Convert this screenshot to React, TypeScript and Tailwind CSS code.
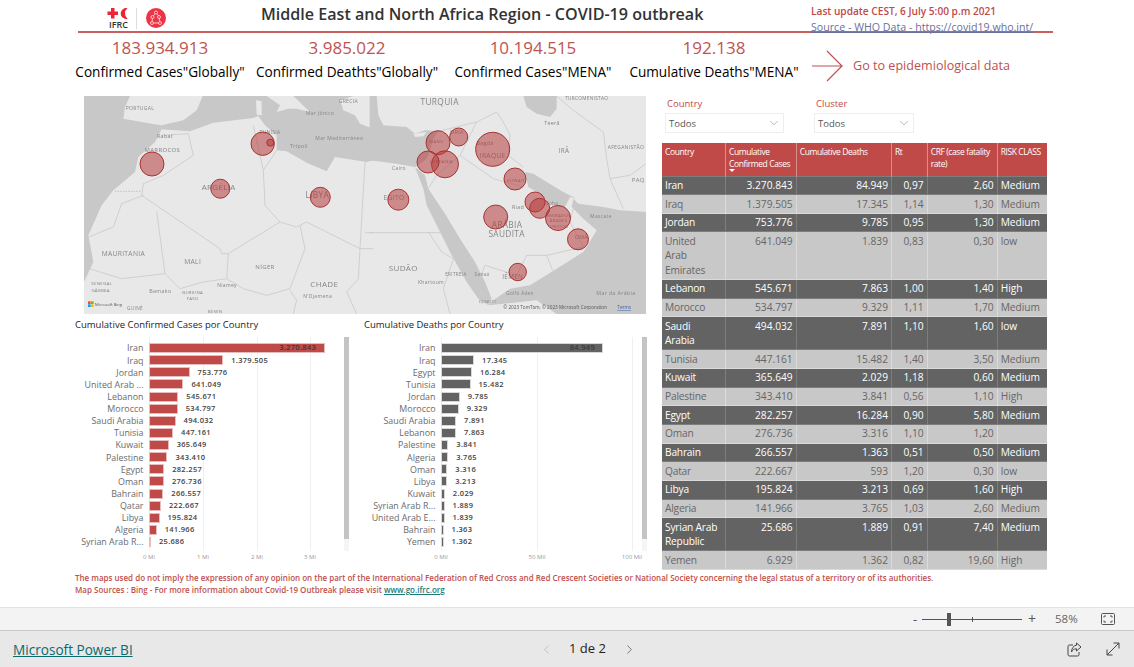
import { ChevronDown, ChevronLeft, ChevronRight } from 'lucide-react';

// ==========================================
// Data
// ==========================================

const kpis = [
  { value: '183.934.913', label: 'Confirmed Cases"Globally"', width: 'w-[180px]' },
  { value: '3.985.022', label: 'Confirmed Deathts"Globally"', width: 'w-[194px]' },
  { value: '10.194.515', label: 'Confirmed Cases"MENA"', width: 'w-[178px]' },
  { value: '192.138', label: 'Cumulative Deaths"MENA"', width: 'w-[184px]' },
];

const rows = [
  ['Iran', '3.270.843', '84.949', '0,97', '2,60', 'Medium'],
  ['Iraq', '1.379.505', '17.345', '1,14', '1,30', 'Medium'],
  ['Jordan', '753.776', '9.785', '0,95', '1,30', 'Medium'],
  ['United\nArab\nEmirates', '641.049', '1.839', '0,83', '0,30', 'low'],
  ['Lebanon', '545.671', '7.863', '1,00', '1,40', 'High'],
  ['Morocco', '534.797', '9.329', '1,11', '1,70', 'Medium'],
  ['Saudi\nArabia', '494.032', '7.891', '1,10', '1,60', 'low'],
  ['Tunisia', '447.161', '15.482', '1,40', '3,50', 'Medium'],
  ['Kuwait', '365.649', '2.029', '1,18', '0,60', 'Medium'],
  ['Palestine', '343.410', '3.841', '0,56', '1,10', 'High'],
  ['Egypt', '282.257', '16.284', '0,90', '5,80', 'Medium'],
  ['Oman', '276.736', '3.316', '1,10', '1,20', ''],
  ['Bahrain', '266.557', '1.363', '0,51', '0,50', 'Medium'],
  ['Qatar', '222.667', '593', '1,20', '0,30', 'low'],
  ['Libya', '195.824', '3.213', '0,69', '1,60', 'High'],
  ['Algeria', '141.966', '3.765', '1,03', '2,60', 'Medium'],
  ['Syrian Arab\nRepublic', '25.686', '1.889', '0,91', '7,40', 'Medium'],
  ['Yemen', '6.929', '1.362', '0,82', '19,60', 'High'],
];

const casesChart: [string, number][] = [
  ['Iran', 3270843],
  ['Iraq', 1379505],
  ['Jordan', 753776],
  ['United Arab ...', 641049],
  ['Lebanon', 545671],
  ['Morocco', 534797],
  ['Saudi Arabia', 494032],
  ['Tunisia', 447161],
  ['Kuwait', 365649],
  ['Palestine', 343410],
  ['Egypt', 282257],
  ['Oman', 276736],
  ['Bahrain', 266557],
  ['Qatar', 222667],
  ['Libya', 195824],
  ['Algeria', 141966],
  ['Syrian Arab R...', 25686],
];

const deathsChart: [string, number][] = [
  ['Iran', 84949],
  ['Iraq', 17345],
  ['Egypt', 16284],
  ['Tunisia', 15482],
  ['Jordan', 9785],
  ['Morocco', 9329],
  ['Saudi Arabia', 7891],
  ['Lebanon', 7863],
  ['Palestine', 3841],
  ['Algeria', 3765],
  ['Oman', 3316],
  ['Libya', 3213],
  ['Kuwait', 2029],
  ['Syrian Arab R...', 1889],
  ['United Arab E...', 1839],
  ['Bahrain', 1363],
  ['Yemen', 1362],
];

const bubbles = [
  [68, 68, 12],
  [178.7, 47.7, 11.7],
  [186.3, 46.7, 3.5],
  [136.3, 92.7, 9.5],
  [236.3, 101.3, 10],
  [314.3, 103.7, 10.5],
  [354, 46.7, 12],
  [374.7, 41, 9],
  [408.7, 53.3, 17],
  [361, 68.3, 13.5],
  [344, 66, 11],
  [431, 83, 11],
  [411.7, 121, 12],
  [451, 106, 10],
  [455.7, 112.3, 10],
  [474, 122, 12.5],
  [494, 143.3, 10.5],
  [433.7, 176, 8.7],
];

const westLabels: [string, number, number, number][] = [
  ['PORTUGAL', 180, 54, 15],
  ['Rabat', 255, 139, 16],
  ['MARROCOS', 247, 181, 18],
  ['TUNÍSIA', 570, 125, 15],
  ['Trípoli', 657, 167, 16],
  ['Mar Jônico', 720, 68, 15],
  ['GRÉCIA', 805, 34, 15],
  ['Mar Mediterrâneo', 778, 145, 15],
  ['ARGÉLIA', 416, 293, 24],
  ['LIBYA', 712, 317, 25],
  ['MAURITANIA', 130, 492, 20],
  ['MALI', 338, 517, 20],
  ['NÍGER', 555, 530, 18],
  ['CHADE', 733, 586, 24],
  ['SENEGAL', 65, 578, 13],
  ['GÂMBIA', 62, 601, 13],
  ['Bamako', 241, 604, 16],
  ['BURKINA', 338, 607, 13],
  ['FASO', 338, 625, 13],
  ['Niamey', 441, 586, 15],
  ["N'Djamena", 713, 618, 15],
  ['GUINÉ', 165, 655, 14],
  ['BENIN', 405, 662, 13],
];

const eastLabels: [string, number, number, number][] = [
  ['TURQUIA', 209, 38, 25],
  ['TURCOMENISTÃO', 650, 24, 14],
  ['Teerã', 546, 98, 16],
  ['IRÃ', 582, 184, 19],
  ['AFEGANISTÃO', 768, 171, 15],
  ['PAQ', 805, 271, 18],
  ['SÍRIA', 260, 125, 15],
  ['Bagdá', 345, 158, 16],
  ['IRAQUE', 368, 197, 20],
  ['LÍBANO', 195, 152, 13],
  ['JORDANIA', 215, 212, 13],
  ['KUWAIT', 438, 270, 13],
  ['Cairo', 87, 234, 15],
  ['EGITO', 72, 324, 20],
  ['Riad', 444, 352, 16],
  ['Doha', 545, 339, 14],
  ['EMIRADOS', 566, 375, 13],
  ['ÁRABES', 566, 391, 13],
  ['UNIDOS', 566, 409, 13],
  ['Mascate', 693, 377, 15],
  ['ARÁBIA', 411, 407, 25],
  ['SAUDITA', 410, 436, 25],
  ['OMÃ', 634, 441, 16],
  ['SUDÃO', 100, 538, 24],
  ['ERITREIA', 258, 553, 14],
  ['Sanaá', 336, 552, 14],
  ['IÊMEN', 428, 562, 19],
  ['Khartoum', 183, 577, 15],
  ['Golfo Áden', 450, 610, 14],
  ['Mar da Arábia', 738, 609, 16],
  ['DJIBUTI', 352, 634, 13],
];

// ==========================================
// Map
// ==========================================

function RegionMap() {
  return (
    <div className="relative ml-[9px] h-[218px] w-[562px] overflow-hidden">
      <svg viewBox="0 0 1686 654" className="h-full w-full blur-[0.35px]">
        <rect width="1686" height="654" fill="#e8e8e8" />
        <g transform="translate(-12,-12)">
          <path
            d="M12 12L150 12L135 45L130 80L215 95L245 100L245 112L225 150L175 195L165 240L100 295L65 340L25 430L40 510L12 570Z"
            fill="#c8c8c8"
          />
          <path
            d="M245 100L310 85L350 55L368 12L880 12L880 205L860 210L765 195L740 238L680 212L620 178L590 175L590 130L555 100L535 72L520 78L400 92L330 118L245 112Z"
            fill="#c8c8c8"
          />
          <path
            d="M500 12L640 12L690 60L650 50L625 50L590 60L600 40L560 12ZM780 25L820 12L880 12L880 110L840 95L825 70L790 55ZM528 25L545 28L545 70L530 68Z"
            fill="#e8e8e8"
          />
          <g fill="none" stroke="#cacaca" strokeWidth="2.5">
            <path d="M245 130L325 125L340 190L250 250L190 275L185 310L420 470L425 485L445 485L600 390L555 340L550 235L540 190L520 100" />
            <path d="M550 235L590 175M190 310L125 335L100 405L25 435M230 358L255 545L125 560L60 540L30 530M445 485L440 560L370 570L300 590L255 545" />
            <path d="M600 390L650 405L680 390L840 470L855 210M660 400L675 470L630 590L560 610L490 590L440 560M840 470L835 560L800 600L830 666M630 595L650 625L640 666M840 470L880 470M855 422L880 422" />
          </g>
          <path d="M105 298L185 298" stroke="#aaaaaa" strokeWidth="2" strokeDasharray="4 4" />
        </g>
        <g transform="translate(858,-12)">
          <path
            d="M-1 12L20 12L25 70L40 100L110 105L135 125L165 115L205 118L190 140L175 190L165 205L135 225L80 215L0 205L-1 205Z"
            fill="#c8c8c8"
          />
          <path d="M460 12L560 12L560 50L540 75L500 65L470 45Z" fill="#c8c8c8" />
          <path
            d="M135 225L160 290L170 340L215 430L245 490L290 570L325 620L355 640L365 620L345 570L315 510L270 440L225 365L175 290L165 250Z"
            fill="#c8c8c8"
          />
          <path d="M465 240L475 285L510 305L545 340L585 345L600 315L620 320L580 300L530 270L490 245Z" fill="#c8c8c8" />
          <path
            d="M828 360L750 355L700 345L625 335L610 320L605 345L640 380L680 415L650 465L640 480L560 530L480 580L420 590L370 625L355 640L400 635L500 625L560 666L828 666Z"
            fill="#c8c8c8"
          />
          <path d="M130 125L170 120L160 133L135 135Z" fill="#e8e8e8" />
          <g fill="none" stroke="#cacaca" strokeWidth="2.5">
            <path d="M-3 422L222 422M205 118L320 90L380 60L400 90L420 130L415 190L460 225M320 90L270 190L370 260L460 285M270 190L200 250L175 290" />
            <path d="M560 12L610 55L700 120L710 200L720 260L780 250L828 215M720 260L760 350M530 490L640 465L600 390L610 350M530 490L470 490L440 550L345 520L330 560M530 490L548 535" />
            <path d="M175 420L215 480L250 500L220 590L240 666" />
          </g>
        </g>
        <g fontFamily="'Open Sans', sans-serif" textAnchor="middle" fill="#858585">
          <g transform="translate(-12,-12)">
            {westLabels.map(([t, x, y, s]) => (
              <text key={t} x={x} y={y} fontSize={s} letterSpacing="1">
                {t}
              </text>
            ))}
          </g>
          <g transform="translate(858,-12)">
            {eastLabels.map(([t, x, y, s]) => (
              <text key={t} x={x} y={y} fontSize={s} letterSpacing="1">
                {t}
              </text>
            ))}
          </g>
        </g>
        {bubbles.map(([x, y, r]) => (
          <circle
            key={`${x}-${y}`}
            cx={x * 3}
            cy={y * 3}
            r={r * 3}
            fill="#b53c3c"
            fillOpacity="0.55"
            stroke="#a83333"
            strokeWidth="3"
          />
        ))}
        <g transform="translate(12,616)">
          <rect x="0" y="0" width="8" height="8" fill="#f25022" />
          <rect x="9" y="0" width="8" height="8" fill="#7fba00" />
          <rect x="0" y="9" width="8" height="8" fill="#00a4ef" />
          <rect x="9" y="9" width="8" height="8" fill="#ffb900" />
          <text x="21" y="14" fontSize="12" fill="#555555" fontFamily="'Open Sans', sans-serif">
            Microsoft Bing
          </text>
        </g>
        <text x="1258" y="640" fontSize="14" fill="#555555" fontFamily="'Open Sans', sans-serif">
          © 2023 TomTom, © 2023 Microsoft Corporation
        </text>
        <text x="1600" y="640" fontSize="14" fill="#3a5fa8" textDecoration="underline" fontFamily="'Open Sans', sans-serif">
          Terms
        </text>
      </svg>
    </div>
  );
}

// ==========================================
// Bar chart
// ==========================================

interface BarChartProps {
  title: string;
  data: [string, number][];
  pxPerUnit: number;
  barClass: string;
  ticks: [string, number][];
  labelClass: string;
  plotClass: string;
  insideLabelClass: string;
}

function BarChart({ title, data, pxPerUnit, barClass, ticks, labelClass, plotClass, insideLabelClass }: BarChartProps) {
  return (
    <div>
      <div className="text-[9.5px] leading-[13px] text-[#252423]">{title}</div>
      <div className="mt-[6px] flex">
        <div className="pt-[5px]">
          <div className="relative">
            {ticks.map(([label, x]) => (
              <div key={label}>
                <div
                  className="absolute top-[-5px] h-[214px] w-px bg-[#f0f0f0]"
                  style={{ left: x }}
                />
                <div
                  className="absolute top-[211px] w-[30px] -translate-x-1/2 text-center text-[6px] leading-[8px] text-[#999999]"
                  style={{ left: x }}
                >
                  {label}
                </div>
              </div>
            ))}
            <div className="relative">
              {data.map(([name, value], i) => (
                <div key={name} className="flex h-[12.125px] items-center">
                  <div className={`${labelClass} shrink-0 whitespace-nowrap pr-[5.5px] text-right text-[8.9px] text-[#6b6b6b]`}>
                    {name}
                  </div>
                  <div className={`${plotClass} flex items-center`}>
                    <div
                      className={`${barClass} flex h-[10px] shrink-0 items-center justify-end border-[0.5px]`}
                      style={{ width: value * pxPerUnit }}
                    >
                      {i === 0 && (
                        <span className={`${insideLabelClass} text-[7.5px] font-semibold tracking-[0.3px] text-[#3a3a3a]`}>
                          {value.toLocaleString('de-DE')}
                        </span>
                      )}
                    </div>
                    {i > 0 && (
                      <span className="ml-[8px] whitespace-nowrap text-[7.5px] font-semibold tracking-[0.3px] text-[#444444]">
                        {value.toLocaleString('de-DE')}
                      </span>
                    )}
                  </div>
                </div>
              ))}
            </div>
          </div>
        </div>
        <div className="flex h-[214px] w-[5px] flex-col bg-[#f5f5f5]">
          <div className="h-[202px] bg-[#c4c4c4]" />
        </div>
      </div>
    </div>
  );
}

// ==========================================
// Table
// ==========================================

function DataTable() {
  return (
    <table className="w-[385px] table-fixed border-collapse text-[10.2px] leading-[14.4px]">
      <colgroup>
        <col className="w-[63.5px]" />
        <col className="w-[70.7px]" />
        <col className="w-[95.3px]" />
        <col className="w-[35.7px]" />
        <col className="w-[70px]" />
        <col className="w-[49.8px]" />
      </colgroup>
      <thead>
        <tr className="h-[33px] bg-[#bf4a48] text-left align-top text-[8.5px] font-normal leading-[12px] tracking-[-0.4px] text-white">
          <th className="border-r border-[#d98f8d] px-[3px] pt-[3px] font-normal">Country</th>
          <th className="relative border-r border-[#d98f8d] pl-[3px] pt-[3px] font-normal">
            Cumulative Confirmed Cases
            <span className="absolute left-[3px] top-[26px] h-0 w-0 border-x-[3px] border-t-[3px] border-x-transparent border-t-white" />
          </th>
          <th className="border-r border-[#d98f8d] px-[3px] pt-[3px] font-normal">Cumulative Deaths</th>
          <th className="border-r border-[#d98f8d] px-[3px] pt-[3px] font-normal">Rt</th>
          <th className="border-r border-[#d98f8d] px-[3px] pt-[3px] font-normal">CRF (case fatality rate)</th>
          <th className="whitespace-nowrap pl-[3px] pt-[3px] font-normal">RISK CLASS</th>
        </tr>
      </thead>
      <tbody>
        {rows.map((row, i) => {
          const dark = i % 2 === 0;
          const cell = `border pb-[1.75px] pt-[1.5px] align-top ${dark ? 'border-[#7d7d7d]' : 'border-[#dadada]'}`;
          return (
            <tr
              key={row[0]}
              className={dark ? 'bg-[#636363] font-medium text-white' : 'bg-[#c8c8c8] text-[#666666]'}
            >
              <td className={`${cell} whitespace-pre-line border-l-0 pl-[3px] tracking-[-0.2px]`}>{row[0]}</td>
              <td className={`${cell} pr-[3px] text-right`}>{row[1]}</td>
              <td className={`${cell} pr-[3px] text-right`}>{row[2]}</td>
              <td className={`${cell} pr-[3px] text-right`}>{row[3]}</td>
              <td className={`${cell} pr-[3px] text-right`}>{row[4]}</td>
              <td className={`${cell} border-r-0 pl-[3px]`}>{row[5]}</td>
            </tr>
          );
        })}
      </tbody>
    </table>
  );
}

function Slicer({ label, width }: { label: string; width: string }) {
  return (
    <div className={width}>
      <div className="pl-[2px] text-[9.5px] leading-[13px] text-[#bf4a48]">{label}</div>
      <div className="mt-[3px] flex h-[20px] items-center justify-between border border-[#eeeeee] pl-[3px] pr-[2px] text-[9.5px] text-[#555555]">
        <span className="pt-[3px]">Todos</span>
        <ChevronDown size={14} strokeWidth={0.8} className="text-[#666666]" />
      </div>
    </div>
  );
}

// ==========================================
// Page
// ==========================================

export default function App() {
  return (
    <div className="flex h-[667px] w-[1134px] flex-col overflow-hidden bg-white font-['Open_Sans','Noto_Sans',sans-serif]">
      <div className="flex-1">
        {/* header */}
        <div className="ml-[78px] flex h-[33px] w-[975px] border-b-2 border-[#c9605c]">
          <div className="flex w-[183px] shrink-0 items-start pl-[29px] pt-[8px]">
            <div className="flex flex-col items-center">
              <svg width="23" height="11" viewBox="0 0 22 11">
                <path d="M3.5 0H7V3.5H10.5V7H7V10.5H3.5V7H0V3.500H3.500Z" fill="#ee2435" />
                <path d="M20 .3A5.400 5.400 0 1 0 20 10.700A6.600 6.600 0 0 1 20 .3Z" fill="#ee2435" />
              </svg>
              <span className="mt-[1px] text-[9px] font-semibold leading-[10px] text-[#333333]">IFRC</span>
            </div>
            <div className="ml-[6px] h-[21px] w-px bg-[#dddddd]" />
            <svg width="20" height="20" viewBox="0 0 20 20" className="ml-[9px]">
              <circle cx="10" cy="10" r="10" fill="#ee3344" />
              <g fill="none" stroke="#ffffff" strokeWidth="0.7">
                <circle cx="10" cy="4.500" r="1.500" />
                <circle cx="6.500" cy="9" r="1.500" />
                <circle cx="13" cy="9" r="1.500" />
                <circle cx="6" cy="15" r="1.500" />
                <circle cx="14" cy="15" r="1.500" />
                <path d="M9 6L7.300 7.800M11 6L12.400 7.700M6.400 10.500L6.100 13.500M13.200 10.500L13.800 13.500M7.500 15H12.500" />
              </g>
            </svg>
          </div>
          <div className="w-[550px] shrink-0 text-[16.1px] font-semibold leading-[28px] text-[#333333]">
            Middle East and North Africa Region - COVID-19 outbreak
          </div>
          <div className="whitespace-nowrap">
            <div className="pt-[4px] text-[10.15px] font-semibold leading-[15px] text-[#bf4a48]">
              Last update CEST, 6 July 5:00 p.m  2021
            </div>
            <div className="mt-[2px] text-[10.65px] leading-[13px] text-[#6a709c] underline">
              Source - WHO Data - https://covid19.who.int/
            </div>
          </div>
        </div>

        {/* kpi cards */}
        <div className="flex items-start pl-[70px] pt-[4px]">
          {kpis.map((kpi) => (
            <div key={kpi.label} className={`${kpi.width} shrink-0 text-center`}>
              <div className="text-[17px] leading-[22px] text-[#bf5350]">{kpi.value}</div>
              <div className="mt-[3px] whitespace-nowrap text-[13.6px] leading-[20px] text-black">{kpi.label}</div>
            </div>
          ))}
          <div className="ml-[6px] mt-[13px] flex items-center">
            <svg width="32" height="32" viewBox="0 0 32 32" fill="none" stroke="#c0504d" strokeWidth="1.2">
              <path d="M0 16H30M15 1L30 16L15 31" />
            </svg>
            <span className="ml-[9px] whitespace-nowrap text-[12.6px] text-[#c0504d]">Go to epidemiological data</span>
          </div>
        </div>

        {/* body */}
        <div className="mt-[14px] flex pl-[75px]">
          <div className="w-[587px] shrink-0">
            <RegionMap />
            <div className="mt-[4px] flex gap-[15px]">
              <BarChart
                title="Cumulative Confirmed Cases por Country"
                data={casesChart}
                pxPerUnit={176 / 3270843}
                barClass="bg-[#bf4a48] border-[#e6bcbc]"
                ticks={[
                  ['0 Mi', 74],
                  ['1 Mi', 128],
                  ['2 Mi', 182],
                  ['3 Mi', 235],
                ]}
                labelClass="w-[74px]"
                plotClass="w-[195px]"
                insideLabelClass="mr-[8px]"
              />
              <BarChart
                title="Cumulative Deaths por Country"
                data={deathsChart}
                pxPerUnit={162 / 84949}
                barClass="bg-[#636363] border-[#d8d8d8]"
                ticks={[
                  ['0 Mil', 77],
                  ['50 Mil', 173],
                  ['100 Mil', 268],
                ]}
                labelClass="w-[77px]"
                plotClass="w-[201px]"
                insideLabelClass="mr-[7px]"
              />
            </div>
          </div>

          <div className="shrink-0">
            <div className="flex h-[47px] gap-[30px] pl-[3px] pt-[1px]">
              <Slicer label="Country" width="w-[119px]" />
              <Slicer label="Cluster" width="w-[100px]" />
            </div>
            <DataTable />
          </div>
        </div>

        {/* footnote */}
        <div className="mt-[2px] pl-[75px] text-[8px] font-semibold leading-[12px] text-[#c0504d]">
          <div>
            The maps used do not imply the expression of any opinion on the part of the International Federation of Red
            Cross and Red Crescent Societies or National Society concerning the legal status of a territory or of its
            authorities.
          </div>
          <div>
            Map Sources : Bing - For more information about Covid-19 Outbreak please visit{' '}
            <span className="text-[#1a7a7a] underline">www.go.ifrc.org</span>
          </div>
        </div>
      </div>

      {/* zoom bar */}
      <div className="flex h-[23px] shrink-0 items-center border-t border-[#e2e2e2] bg-[#f3f3f3] pl-[913px] text-[#555555]">
        <span className="w-[9px] text-[13px] leading-none">-</span>
        <div className="relative h-px w-[100px] bg-[#555555]">
          <div className="absolute left-[25px] top-[-6px] h-[13px] w-[4px] bg-[#555555]" />
          <div className="absolute left-[50px] top-[-2px] h-[5px] w-px bg-[#555555]" />
        </div>
        <span className="ml-[6px] text-[14px] leading-none">+</span>
        <span className="ml-[19px] text-[11.5px] text-[#666666]">58%</span>
        <svg width="14" height="12" viewBox="0 0 14 12" fill="none" stroke="#555555" className="ml-[23px]">
          <rect x="0.5" y="0.5" width="13" height="11" rx="1" />
          <path d="M3 4.500V3H5M9 3H11V4.500M11 7.500V9H9M5 9H3V7.500" />
        </svg>
      </div>

      {/* footer */}
      <div className="relative flex h-[37px] shrink-0 items-center border-t border-[#c8c8c8] bg-[#e8e8e8]">
        <span className="ml-[13px] mt-[3px] text-[13.6px] text-[#0b6a6e] underline">Microsoft Power BI</span>
        <div className="absolute left-[539px] flex items-center">
          <ChevronLeft size={15} strokeWidth={1.2} className="text-[#b5b5b5]" />
          <span className="ml-[15px] text-[13px] font-medium text-[#222222]">1 de 2</span>
          <ChevronRight size={15} strokeWidth={1.2} className="ml-[16px] text-[#555555]" />
        </div>
        <svg width="15" height="15" viewBox="0 0 15 15" fill="none" stroke="#444444" className="absolute left-[1067px]">
          <path d="M6 3H2.500A1.500 1.500 0 0 0 1 4.500V12.500A1.500 1.500 0 0 0 2.500 14H10.500A1.500 1.500 0 0 0 12 12.500V10" />
          <path d="M9.500 1L14 5L9.500 9V6.800C7 6.800 5.500 7.800 4.500 10C4.500 6.500 6.500 3.500 9.500 3.200Z" />
        </svg>
        <svg width="14" height="14" viewBox="0 0 14 14" fill="none" stroke="#444444" className="absolute left-[1106px]">
          <path d="M1 13L13 1M7.500 1H13V6.500M1 7.500V13H6.500" />
        </svg>
      </div>
    </div>
  );
}
